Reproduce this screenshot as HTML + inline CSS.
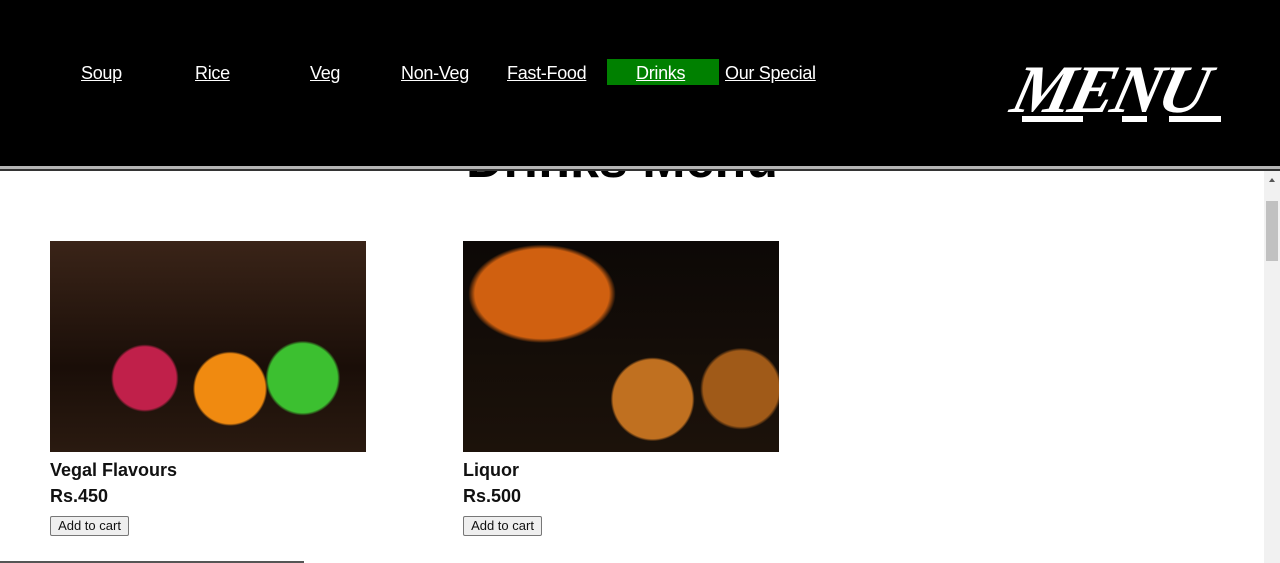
<!DOCTYPE html>
<html><head><style>
body{margin:0;width:1280px;height:563px;overflow:hidden;background:#fff;font-family:"Liberation Sans",sans-serif;position:relative}
.hdr{position:absolute;left:0;top:0;width:1280px;height:166px;background:#000;z-index:2}
.line{position:absolute;left:0;top:166px;width:1280px;height:3px;background:#b5b5b5;z-index:2;border-bottom:2px solid #333}
.nav a{position:absolute;top:61px;color:#fff;font:18px "Liberation Sans",sans-serif;letter-spacing:-0.3px;text-decoration:underline;line-height:24px}
.act{position:absolute;left:607px;top:59px;width:112px;height:26px;background:#008000}
.logo{position:absolute;left:1014px;top:50px;color:#fff;font:italic bold 68px "Liberation Serif",serif;letter-spacing:-3px;transform:skewX(-14deg)}
.u{position:absolute;top:116px;height:6px;background:#fff}
h1{position:absolute;left:466px;top:134px;margin:0;font:bold 52px/52px "Liberation Sans",sans-serif;z-index:1}
.img{position:absolute;top:241px;width:316px;height:211px}
.t{position:absolute;font-size:18px;font-weight:bold;color:#111}
.btn{position:absolute;top:516px;width:77px;height:18px;border:1px solid #777;border-radius:2px;background:#efefef;font:13px "Liberation Sans",sans-serif;text-align:center;line-height:18px;color:#111}
.sb{position:absolute;left:1264px;top:171px;width:16px;height:392px;background:#f1f1f1}
.th{position:absolute;left:1266px;top:201px;width:12px;height:60px;background:#c1c1c1}
</style></head><body>
<div class="hdr">
<div class="act"></div>
<div class="nav">
<a style="left:81px">Soup</a><a style="left:195px">Rice</a><a style="left:310px">Veg</a><a style="left:401px">Non-Veg</a><a style="left:507px">Fast-Food</a><a style="left:636px">Drinks</a><a style="left:725px">Our Special</a>
</div>
<div class="logo">MENU</div>
<div class="u" style="left:1022px;width:61px"></div>
<div class="u" style="left:1122px;width:25px"></div>
<div class="u" style="left:1169px;width:52px"></div>
</div>
<div class="line"></div>
<h1>Drinks Menu</h1>
<div class="img" style="left:50px;background:radial-gradient(circle at 30% 65%,#c0204a 0 12%,transparent 13%),radial-gradient(circle at 57% 70%,#f08a10 0 15%,transparent 16%),radial-gradient(circle at 80% 65%,#3cc030 0 12%,transparent 13%),linear-gradient(#3a2418,#1a0e08 60%,#2a1a10)"></div>
<div class="img" style="left:463px;background:radial-gradient(circle at 60% 75%,#c07020 0 16%,transparent 17%),radial-gradient(circle at 88% 70%,#a05a18 0 12%,transparent 13%),radial-gradient(ellipse at 25% 25%,#d06010 0 20%,transparent 22%),linear-gradient(#0c0806,#1c120a)"></div>
<div class="t" style="left:50px;top:460px">Vegal Flavours</div>
<div class="t" style="left:50px;top:486px">Rs.450</div>
<div class="btn" style="left:50px">Add to cart</div>
<div class="t" style="left:463px;top:460px">Liquor</div>
<div class="t" style="left:463px;top:486px">Rs.500</div>
<div class="btn" style="left:463px">Add to cart</div>
<div style="position:absolute;left:0;top:561px;width:304px;height:2px;background:#555"></div>
<div class="sb"></div><div class="th"></div>
<div style="position:absolute;left:1269px;top:178px;border:3px solid transparent;border-bottom:4px solid #555;border-top:0"></div>
</body></html>
